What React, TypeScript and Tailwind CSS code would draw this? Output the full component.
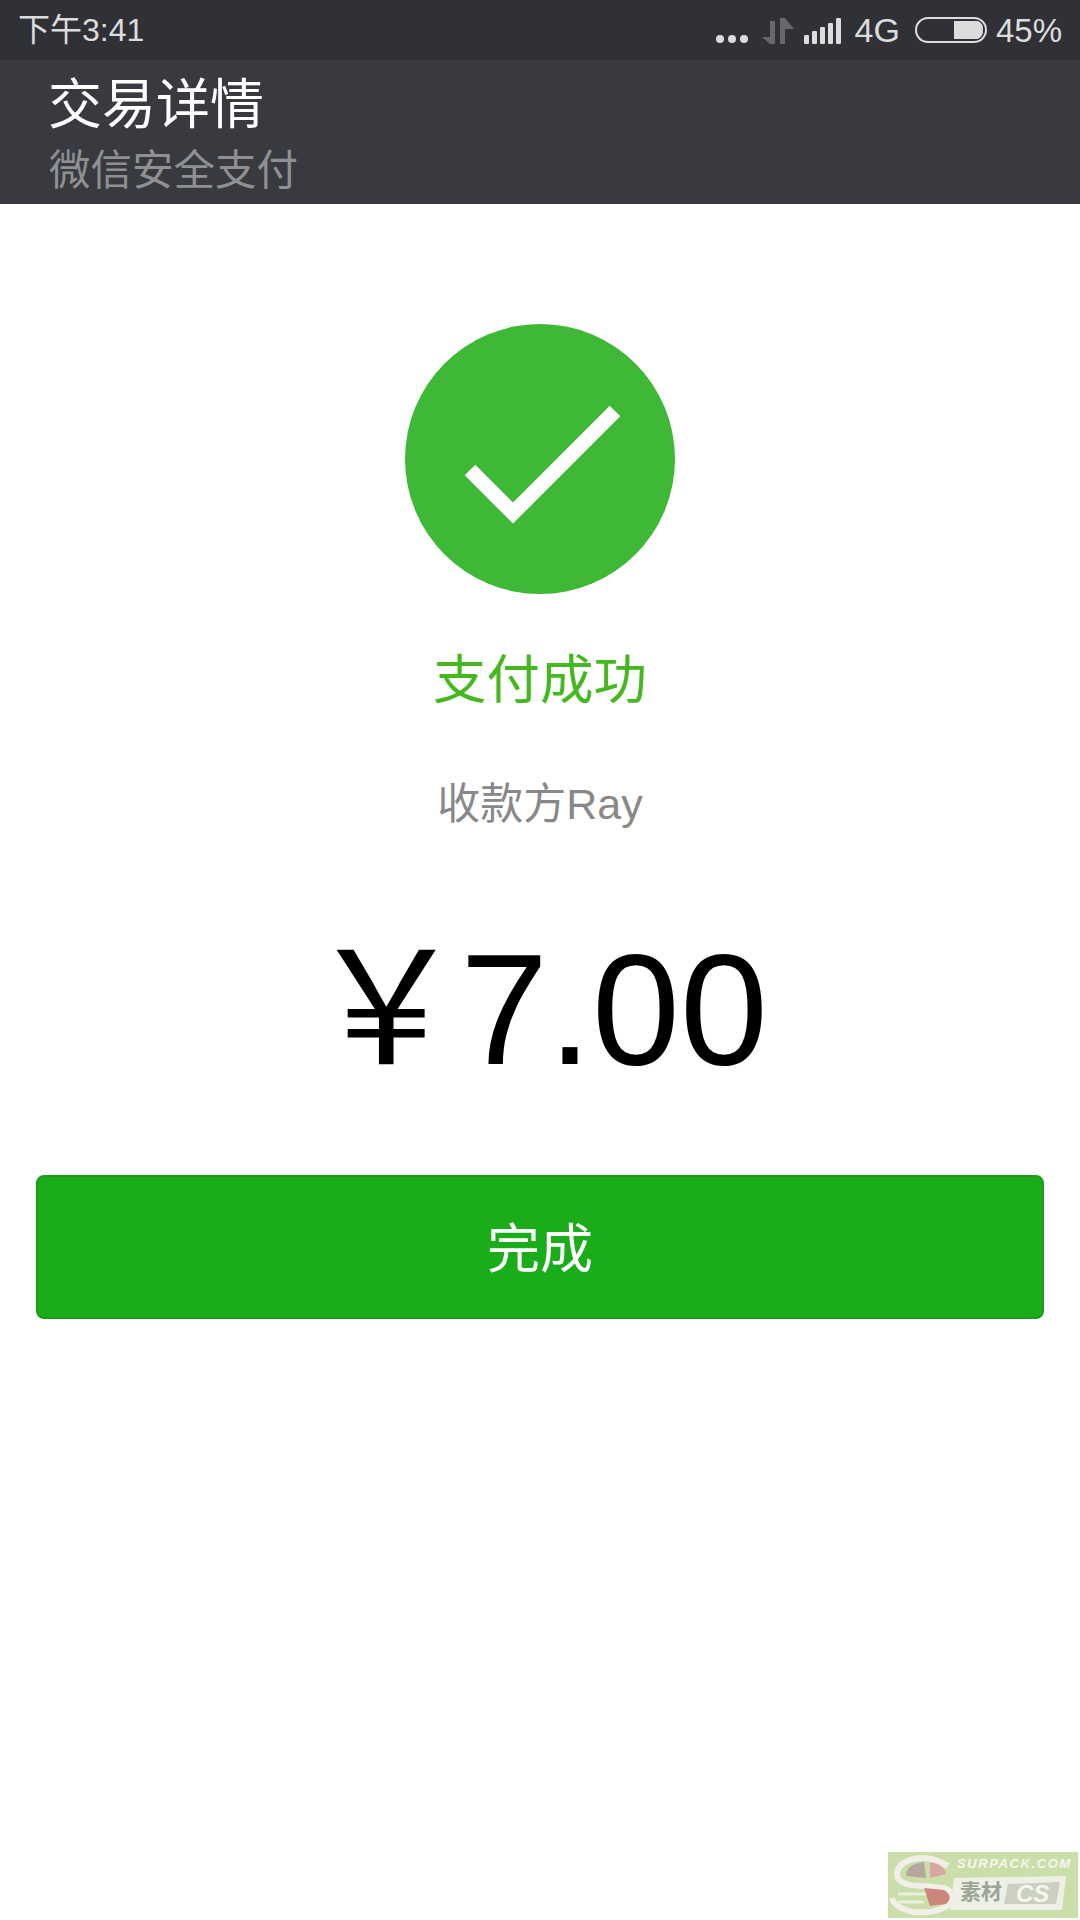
import type { ReactNode } from 'react'

const cjk = "font-['Liberation_Sans','Noto_Sans_CJK_SC',sans-serif]"

// ── Status Bar ──

function StatusIcons() {
  return (
    <svg width="140" height="30" viewBox="0 0 140 30" className="mr-[9px] shrink-0">
      <circle cx="14" cy="24" r="4" fill="#dcdcdc" />
      <circle cx="26" cy="24" r="4" fill="#dcdcdc" />
      <circle cx="38" cy="24" r="4" fill="#dcdcdc" />
      <path d="M69 6 h-5 v16 h-8 l8 7 h5 z" fill="#67686b" />
      <path d="M74 29 h5 v-15 h9 l-9 -11 h-5 z" fill="#67686b" />
      <rect x="98" y="20" width="5" height="9" rx="1" fill="#dcdcdc" />
      <rect x="106" y="16" width="5" height="13" rx="1" fill="#dcdcdc" />
      <rect x="114" y="12" width="5" height="17" rx="1" fill="#dcdcdc" />
      <rect x="122" y="8" width="5" height="21" rx="1" fill="#dcdcdc" />
      <rect x="130" y="3" width="5" height="26" rx="1" fill="#dcdcdc" />
    </svg>
  )
}

function Battery() {
  return (
    <svg width="72" height="28" viewBox="0 0 72 28" className="ml-[15px] mr-[9px] shrink-0">
      <rect x="1" y="2" width="70" height="24" rx="12" fill="none" stroke="#dcdcdc" strokeWidth="2" />
      <path d="M39 5 h24 a9 9 0 0 1 5 9 a9 9 0 0 1 -5 9 h-24 z" fill="#dcdcdc" />
    </svg>
  )
}

function StatusBar() {
  return (
    <div className={`flex h-[60px] items-center justify-between bg-[#303136] pl-[18px] pr-[18px] text-[#dcdcdc] ${cjk}`}>
      <span className="text-[32px] leading-none">下午3:41</span>
      <div className="flex items-center">
        <StatusIcons />
        <span className="text-[34px] leading-none">4G</span>
        <Battery />
        <span className="text-[33px] leading-none">45%</span>
      </div>
    </div>
  )
}

// ── Header ──

function Header({ title, subtitle }: { title: string; subtitle: string }) {
  return (
    <header className={`flex h-[144px] flex-col bg-[#393a3f] pl-[49px] pt-[12px] ${cjk}`}>
      <h1 className="-ml-px text-[54px] font-normal leading-[66px] text-white">{title}</h1>
      <p className="mt-[7px] text-[41.5px] leading-[52px] text-[#8f9093]">{subtitle}</p>
    </header>
  )
}

// ── Success Mark ──

function SuccessMark() {
  return (
    <svg width="270" height="270" viewBox="0 0 270 270" className="shrink-0">
      <circle cx="135" cy="135" r="135" fill="#3fb838" />
      <path d="M65 146 L108 189 L210 87" fill="none" stroke="#fff" strokeWidth="15" strokeLinecap="butt" strokeLinejoin="miter" />
    </svg>
  )
}

// ── Watermark ──

function Watermark(): ReactNode {
  return (
    <div className="absolute bottom-[2px] right-[2px] h-[66px] w-[190px] overflow-hidden bg-[#c9dea8]">
      <svg width="190" height="66" viewBox="0 0 190 66" className="absolute left-0 top-0">
        <path d="M60 14 Q40 2 22 8 Q6 14 10 26 Q14 34 36 34 L56 36 Q70 42 62 52 Q50 62 26 60 Q6 56 4 46" fill="none" stroke="#f1efe8" strokeWidth="6" />
        <path d="M18 24 Q18 12 36 10 L38 26 z" fill="#b6a79c" />
        <path d="M42 10 Q56 12 58 22 L42 26 z" fill="#d8a79f" />
        <path d="M36 36 L56 38 Q66 44 58 52 L42 54 z" fill="#c9877e" />
        <path d="M10 42 H38 M10 50 H36" stroke="#e9ede0" strokeWidth="3" />
        <path d="M66 26 L178 24 L174 58 L62 58 z" fill="#eef0e6" />
        <path d="M120 32 L172 30 L168 52 L116 52 z" fill="#cbd0c2" />
      </svg>
      <span className="absolute left-[69px] top-[5px] font-['Liberation_Sans',sans-serif] text-[13px] font-bold italic leading-none tracking-[1.6px] text-[#f5f7ee]">SURPACK.COM</span>
      <span className={`absolute left-[72px] top-[29px] text-[21px] font-bold leading-none text-[#9aa595] ${cjk}`}>素材</span>
      <span className="absolute left-[128px] top-[30px] font-['Liberation_Sans',sans-serif] text-[24px] font-bold italic leading-none text-[#f5f7ee]">CS</span>
    </div>
  )
}

export default function App() {
  return (
    <div className={`relative flex h-[1920px] w-[1080px] flex-col overflow-hidden bg-white ${cjk}`}>
      <StatusBar />
      <Header title="交易详情" subtitle="微信安全支付" />
      <main className="flex flex-col items-center pt-[120px]">
        <SuccessMark />
        <p className="mt-[52px] text-[53.5px] leading-[70px] text-[#45b81f]">支付成功</p>
        <p className="mt-[58px] text-[43px] leading-[60px] text-[#888888]">收款方Ray</p>
        <p className="mt-[85px] pr-[5px] text-[158px] leading-[180px] text-black"><span className="-mr-[5px]">￥</span>7.00</p>
        <div className="w-full px-[36px] pt-[76px]">
          <button className="flex h-[144px] w-full items-center justify-center rounded-[8px] border-2 border-[#1c9c1c] bg-[#1aad19] pt-[6px] text-[53px] text-white">完成</button>
        </div>
      </main>
      <Watermark />
    </div>
  )
}
